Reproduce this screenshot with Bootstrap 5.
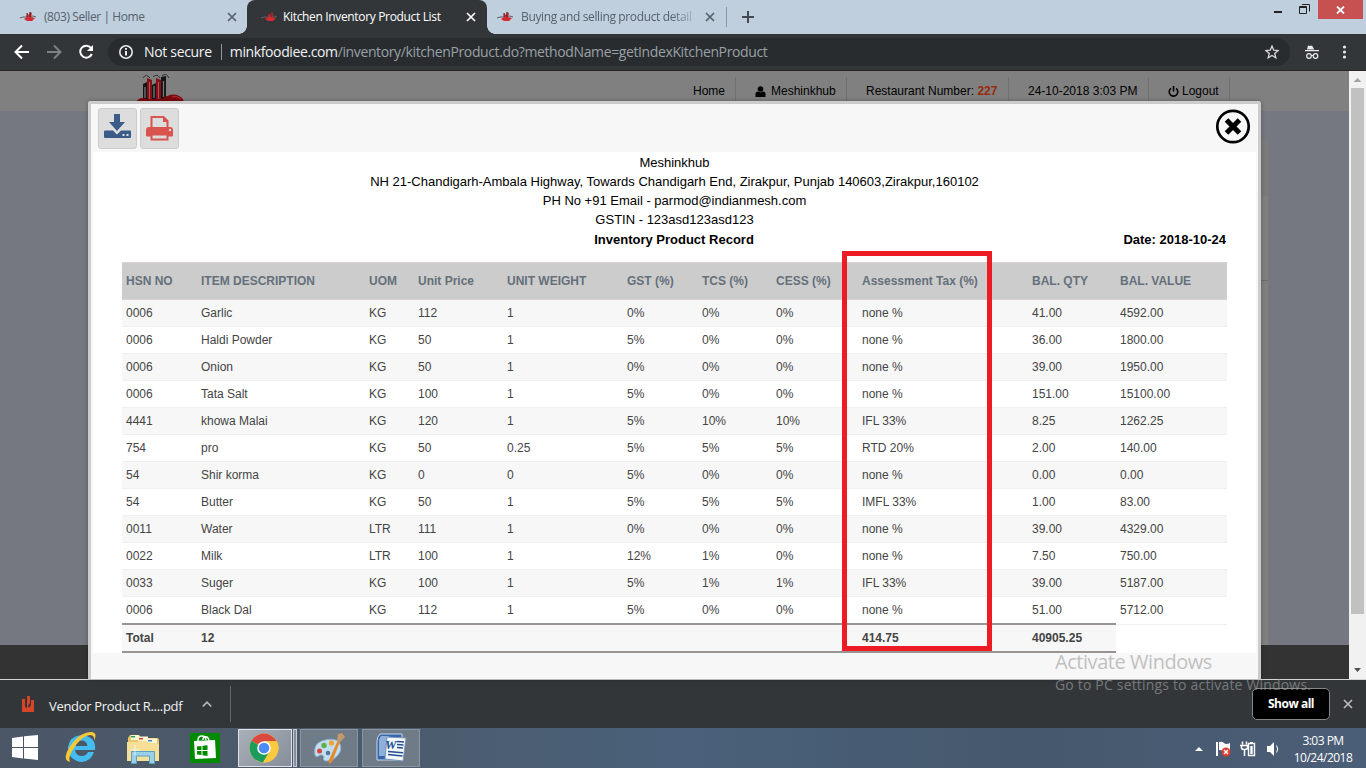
<!DOCTYPE html>
<html lang="en">
<head>
    <meta charset="UTF-8">
    <title>Kitchen Inventory Product List</title>
    <link href="https://cdn.jsdelivr.net/npm/bootstrap@5.3.0/dist/css/bootstrap.min.css" rel="stylesheet">
    <style>
        body { width: 1366px; height: 768px; font-family: "Liberation Sans", Arial, sans-serif; font-size: 12px; line-height: 18px; }
        svg { display: block; flex: none; }
        .ui-font { font-family: "Open Sans", "Noto Sans", sans-serif; white-space: nowrap; }

        /* Browser tabs and address bar */
        .tab-strip { height: 34px; background: #bfcfde; color: #56616b; }
        .tab { height: 34px; font-size: 12px; letter-spacing: -.42px; }
        .tab-one { width: 247px; padding: 0 10px 0 20px; }
        .tab-two { width: 240px; padding: 0 11px 0 14px; background: #323639; color: #fff; border-radius: 8px 8px 0 0; letter-spacing: -.34px; }
        .tab-two::before, .tab-two::after { content: ""; position: absolute; bottom: 0; width: 8px; height: 8px; }
        .tab-two::before { left: -8px; background: radial-gradient(circle at 0 0, transparent 7.5px, #323639 8px); }
        .tab-two::after { right: -8px; background: radial-gradient(circle at 100% 0, transparent 7.5px, #323639 8px); }
        .tab-three { width: 239px; padding: 0 11px 0 10px; letter-spacing: -.3px; }
        .tab-three .tab-text { -webkit-mask-image: linear-gradient(90deg, #000 150px, rgba(0, 0, 0, .2) 174px); }
        .tab-line { width: 1px; height: 20px; background: #8c979f; }
        .win-close { width: 45px; height: 19px; background: #c75050; }
        .toolbar { height: 37px; background: #323639; border-bottom: 1px solid #2a2426; }
        .omnibox { width: 1182px; height: 28px; border-radius: 14px; background: #282c2f; color: #9aa0a6; font-size: 14px; padding-left: 10px; }
        .omnibox b { color: #f1f3f4; font-weight: 400; }
        .omnibox .secure { margin-left: 10px; letter-spacing: -.32px; }
        .omnibox .address { letter-spacing: -.38px; }

        /* Dimmed page behind the dialog */
        .page { height: 608px; background: #757880; }
        .site-bar { height: 40px; background: #808080; color: #000; padding-top: 6px; padding-right: 119px; }
        .site-bar .menu-item { height: 34px; padding: 5px 10px 0 19px; border-right: 1px solid #707070; white-space: nowrap; }
        .site-bar b { color: #982a0a; }
        .site-logo { margin-left: 135px; margin-top: -4px; }
        .panel-edge { width: 1180px; height: 505px; margin: 29px 0 0 88px; background: #808080; }
        .panel-head { height: 56px; background: #7b7b7b; }
        .panel-line { height: 85px; border-bottom: 1px solid #6c6c6c; }
        .site-foot { height: 34px; background: #333; }
        .scroll-track { width: 17px; background: #f1f1f1; }
        .scroll-thumb { width: 13px; height: 526px; background: #c1c1c1; }

        /* Report dialog */
        .report { left: 88px; top: 30px; width: 1173px; height: 578px; background: #f7f7f7; border: 3px solid #ccc; border-bottom: 0; border-radius: 3px 3px 0 0; padding: 0 2px; box-shadow: 0 0 4px rgba(0, 0, 0, .3); }
        .report-tools { height: 48px; padding: 4px 5px; }
        .tool-btn { width: 39px; height: 41px; background: #ddd; border: 1px solid #ccc; border-radius: 3px; padding: 0; }
        .report-body { height: 501px; background: #fff; color: #000; font-size: 13px; line-height: 19px; padding: 1px 29px 0; }
        .stock { width: 1105px; table-layout: fixed; border-collapse: separate; border-spacing: 0; font-size: 12px; line-height: 18px; color: #444; margin-top: 13px; }
        .stock th, .stock td { padding: 0 4px; vertical-align: middle; white-space: nowrap; }
        .stock th { height: 38px; background: #ccc; color: #65707a; border: solid #ddd0d3; border-width: 1px 0; }
        .stock td { height: 27px; border-bottom: 1px solid #f0f0f0; }
        .stock tbody tr:nth-child(odd) td { background: #f7f7f7; }
        .stock tbody tr:last-child td { height: 26px; border-bottom: 0; }
        .stock tfoot td { height: 30px; background: #f7f7f7; border: solid #999392; border-width: 2px 0; font-weight: 700; }
        .stock tfoot td:last-child { background: #fff; border-color: #fff; border-top-width: 1px; box-shadow: inset 0 1px #f0f0f0; }
        .marker { left: 842px; top: 251px; width: 150px; height: 400px; border: 5px solid #ed1c24; }

        /* Download shelf and taskbar */
        .shelf { height: 49px; background: #323639; border-top: 1px solid #d5d5d5; color: #f1f3f4; }
        .shelf-file { width: 231px; height: 36px; border-right: 1px solid #63676b; padding-left: 22px; font-size: 13px; letter-spacing: -.32px; }
        .show-all { width: 78px; height: 32px; background: #000; border: 1px solid #85888a; border-radius: 5px; color: #fff; font-size: 12px; font-weight: 700; letter-spacing: -.47px; padding: 0; }
        .taskbar { height: 40px; background: linear-gradient(90deg, #4b5767, #4c5b6c 28%, #49617a 50%, #46586d 75%, #4b5e77); color: #fff; }
        .task { width: 58px; height: 38px; margin-top: 1px; background: #707b88; border: 1px solid #8d97a3; }
        .task-live { background: linear-gradient(135deg, #a9b0b8, #858e9a); border-color: #dfe2e5; width: 54px; padding-right: 2px; }
        .task-stack { width: 4px; height: 38px; margin: 1px 0 0 1px; background: #858e9a; border: 1px solid #c5cbd0; }
        .clock { width: 66px; font-size: 12px; line-height: 17px; letter-spacing: -.52px; }
        .watermark { left: 1055px; top: 650px; color: rgba(160, 160, 160, .65); font-size: 20px; line-height: 24px; letter-spacing: -.45px; }
        .watermark small { font-size: 14px; line-height: 21px; letter-spacing: .18px; }
    </style>
</head>
<body class="d-flex flex-column overflow-hidden position-relative m-0">
    <svg width="0" height="0" class="position-absolute">
        <defs>
            <symbol id="favicon" viewBox="0 0 16 10">
                <path d="M0 6l3-1h3l7-1 3 1" stroke="#655b61" fill="none"/>
                <path d="M4 7l3-2V1l2 2 1-3 2 1-1 4 4 1-3 3H7z" fill="#d22b32"/>
                <path d="M7 1v4M10 0v5" stroke="#452530"/>
            </symbol>
            <symbol id="cross" viewBox="0 0 10 10"><path d="M1 1l8 8M9 1L1 9" stroke="currentColor" stroke-width="1.7" fill="none"/></symbol>
        </defs>
    </svg>

    <!-- Tabs -->
    <div class="tab-strip ui-font d-flex">
        <div class="tab tab-one d-flex align-items-center">
            <svg width="16" height="10"><use href="#favicon"/></svg>
            <span class="ms-2 me-auto">(803) Seller | Home</span>
            <svg width="10" height="10"><use href="#cross"/></svg>
        </div>
        <div class="tab tab-two d-flex align-items-center position-relative">
            <svg width="16" height="10"><use href="#favicon"/></svg>
            <span class="me-auto" style="margin-left:6px">Kitchen Inventory Product List</span>
            <svg width="10" height="10"><use href="#cross"/></svg>
        </div>
        <div class="tab tab-three d-flex align-items-center">
            <svg width="16" height="10"><use href="#favicon"/></svg>
            <span class="tab-text ms-2 me-auto" style="letter-spacing:-.36px">Buying and selling product detail</span>
            <svg width="10" height="10"><use href="#cross"/></svg>
        </div>
        <div class="d-flex align-items-center">
            <div class="tab-line"></div>
            <svg style="margin-left:15px" width="12" height="12"><path d="M6 0v12M0 6h12" stroke="#45494d" stroke-width="2"/></svg>
        </div>
        <div class="d-flex ms-auto align-items-start" style="margin-right:3px">
            <svg width="44" height="19"><path d="M0 12h8" stroke="#222" stroke-width="2"/><path d="M25.500 6.500h7v7h-7zM26 7.500h7M28 4.500h7.500v7" fill="none" stroke="#222"/></svg>
            <div class="win-close d-flex align-items-center justify-content-center text-white"><svg width="9" height="8"><path d="M1 .5l7 7M8 .5l-7 7" stroke="#fff" stroke-width="1.800"/></svg></div>
        </div>
    </div>

    <!-- Address bar -->
    <div class="toolbar ui-font d-flex align-items-center">
        <svg width="108" height="36" fill="none" stroke="#fff" stroke-width="2">
            <path d="M29 18H16M22 11.500L15.500 18l6.500 6.500"/>
            <path d="M47 18h13M54 11.500l6.500 6.500-6.500 6.500" stroke="#7d8184"/>
            <path d="M91 14a6 6 0 1 0 .8 6"/><path d="M93 11v6h-6z" fill="#fff" stroke="none"/>
        </svg>
        <div class="omnibox d-flex align-items-center">
            <svg width="16" height="16" fill="none" stroke="#e8eaed" stroke-width="1.600"><circle cx="8" cy="8" r="6.200"/><path d="M8 7v4.500M8 4v1.800" stroke-width="2"/></svg>
            <b class="secure">Not secure</b>
            <span class="tab-line" style="height:16px;margin:0 8px 0 9px"></span>
            <span class="address"><b>minkfoodiee.com</b>/inventory/kitchenProduct.do?methodName=getIndexKitchenProduct</span>
            <svg class="ms-auto" style="margin-right:11px" width="14" height="14" viewBox="0 0 14 14"><path d="M7 1l1.700 4.200 4.500.3-3.500 2.900 1.200 4.400L7 10.400l-3.900 2.400 1.200-4.400L.8 5.500l4.500-.3z" fill="none" stroke="#d5d7d9" stroke-width="1.300"/></svg>
        </div>
        <svg width="76" height="36" fill="#e8eaed"><path d="M17 15.500l1-4 2 .6 2-.6 2.300 4zM15 16h14v1.300H15z"/><circle cx="19" cy="22" r="2.300" fill="none" stroke="#e8eaed" stroke-width="1.200"/><circle cx="25.500" cy="22" r="2.300" fill="none" stroke="#e8eaed" stroke-width="1.200"/><path d="M21 21.500h2.500" stroke="#e8eaed"/><circle cx="54.500" cy="13" r="1.600"/><circle cx="54.500" cy="18" r="1.600"/><circle cx="54.500" cy="23" r="1.600"/></svg>
    </div>

    <main class="page d-flex position-relative">
        <div class="flex-grow-1 d-flex flex-column">
            <div class="site-bar d-flex">
                <svg class="site-logo" width="51" height="34" viewBox="0 0 51 34">
                    <path d="M8 11l4-2v20H8zM26 4l5-1v24h-5zM17 12l4-2v17h-4z" fill="#151515"/>
                    <path d="M12 5l5 2v20h-5zM21 5l5 2v20h-5z" fill="#851018"/>
                    <path d="M10 14v11M19 13v12M28.500 8v16" stroke="#777" stroke-width="1.300"/><path d="M14.500 9v17M23.500 9v17" stroke="#aa5860"/>
                    <path d="M8 5q3-5 7 0M18 4q4-4 7 1M27 3q4-4 7 2" fill="none" stroke="#333"/>
                    <path d="M1 29q4-6 10-3h16q8-6 15-4 6 2 7 7z" fill="#7d080e"/><path d="M37 24q5-2 9 2" fill="none" stroke="#b0343c"/>
                </svg>
                <div class="menu-item ms-auto">Home</div>
                <div class="menu-item d-flex" style="width:111px">
                    <svg class="me-1" style="margin-top:4px" width="12" height="11"><circle cx="5.500" cy="3" r="2.800"/><path d="M.5 11V8q0-2.500 2.500-2.500l2.500 1 2.500-1q2.500 0 2.500 2.500v3z"/></svg>Meshinkhub
                </div>
                <div class="menu-item" style="width:162px">Restaurant Number: <b>227</b></div>
                <div class="menu-item" style="width:140px">24-10-2018 3:03 PM</div>
                <div class="menu-item d-flex" style="width:81px">
                    <svg style="margin:4px 3px 0 0" width="11" height="11" fill="none" stroke="#000" stroke-width="1.600"><path d="M3 2.300a4.300 4.300 0 1 0 5 0M5.500 0v5.500"/></svg>Logout
                </div>
            </div>
            <div class="panel-edge"><div class="panel-head"></div><div class="panel-line"></div></div>
            <div class="site-foot"></div>
        </div>
        <div class="scroll-track d-flex flex-column align-items-center">
            <svg width="17" height="17"><path d="M4.500 11L8.500 7l4 4z" fill="#a3a3a3"/></svg>
            <div class="scroll-thumb"></div>
            <svg class="mt-auto" width="17" height="17"><path d="M5 6l3.500 4L12 6z" fill="#505050"/></svg>
        </div>

        <section class="report position-absolute">
            <div class="report-tools d-flex">
                <button class="tool-btn d-flex justify-content-center" style="margin-right:3px" title="Download">
                    <svg width="29" height="30" viewBox="0 0 29 30" fill="#3b5c88"><path d="M11 5h6v8h5l-8 9-8-9h5z"/><path d="M2 21.500h8l4 4 4-4h9q1 0 1 1V28q0 1-1 1H2q-1 0-1-1v-5.500q0-1 1-1z"/><path d="M19.500 25h2v2h-2zM23.500 25h2v2h-2z" fill="#ddd"/></svg>
                </button>
                <button class="tool-btn d-flex justify-content-center" title="Print">
                    <svg width="29" height="33" viewBox="0 0 29 33"><path d="M6.500 20V8h12l4 4v8" fill="#ddd" stroke="#d9534f" stroke-width="2"/><path d="M18 7v6h5.500z" fill="#d9534f"/><path d="M4 18h21q3 0 3 3v5.500q0 1-1 1H2q-1 0-1-1V21q0-3 3-3z" fill="#d9534f"/><path d="M6.500 25.500h16v5h-16z" fill="#ddd" stroke="#d9534f" stroke-width="2"/><circle cx="25" cy="21" r="1.200" fill="#ddd"/></svg>
                </button>
                <svg class="ms-auto" width="36" height="36" viewBox="0 0 36 36" fill="none" stroke="#000"><circle cx="18" cy="18.500" r="15.700" stroke-width="2.700"/><path d="M11.500 12l13 13M24.500 12l-13 13" stroke-width="5"/></svg>
            </div>
            <div class="report-body">
                <div class="text-center">Meshinkhub</div>
                <div class="text-center">NH 21-Chandigarh-Ambala Highway, Towards Chandigarh End, Zirakpur, Punjab 140603,Zirakpur,160102</div>
                <div class="text-center">PH No +91 Email - parmod@indianmesh.com</div>
                <div class="text-center">GSTIN - 123asd123asd123</div>
                <div class="d-flex fw-bold" style="padding-top:1px;padding-right:1px">
                    <span style="flex:1"></span><span>Inventory Product Record</span><span class="text-end" style="flex:1">Date: 2018-10-24</span>
                </div>
                <table class="stock">
                    <colgroup id="cols"></colgroup>
                    <thead>
                        <tr><th>HSN NO</th><th>ITEM DESCRIPTION</th><th>UOM</th><th>Unit Price</th><th>UNIT WEIGHT</th><th>GST (%)</th><th>TCS (%)</th><th>CESS (%)</th><th>Assessment Tax (%)</th><th>BAL. QTY</th><th>BAL. VALUE</th></tr>
                    </thead>
                    <tbody id="stockRows"></tbody>
                    <tfoot>
                        <tr><td>Total</td><td>12</td><td></td><td></td><td></td><td></td><td></td><td></td><td>414.75</td><td>40905.25</td><td></td></tr>
                    </tfoot>
                </table>
            </div>
        </section>
    </main>

    <!-- Downloads -->
    <footer class="shelf ui-font d-flex align-items-center">
        <div class="shelf-file d-flex align-items-center">
            <svg width="12" height="17"><path d="M0 3h3v8l2 1V0h3v7l-2 3 1 2 2-3V4h3v12H0z" fill="#d64526"/></svg>
            <span style="margin:3px 0 0 15px">Vendor Product R....pdf</span>
            <svg style="margin-left:auto;margin-right:18px" width="10" height="6"><path d="M.7 5.500L5 1.200l4.300 4.300" fill="none" stroke="#b5b7b9" stroke-width="1.700"/></svg>
        </div>
        <button class="show-all ms-auto">Show all</button>
        <svg style="margin:0 13px 0 13px;color:#b9bbbd" width="10" height="10"><use href="#cross"/></svg>
    </footer>

    <div class="taskbar ui-font d-flex">
        <svg width="238" height="40">
            <path d="M12 10l11-1.500V19H12zM24 8.300L38 7v12H24zM12 20h11v10.500L12 29zM24 20h14v12l-14-1.500z" fill="#fff"/>
            <!-- Internet Explorer -->
            <path d="M94 24h-6q-2 4-6 4-6 0-7-6h20q1-6-3-11-5-4-11-4-11 1-13 12 0 7 4 11 5 4 10 4 9-1 12-10zM75.500 18q1-5 6-5.500 5 0 6 5.500z" fill="#45bdf0" fill-rule="evenodd"/>
            <path d="M70 34q-8-2-1-14Q79 4 92 4q6 1 2 9 1-6-4-6-6 0-14 10-9 12-6 17z" fill="#f7ca35"/>
            <!-- Explorer -->
            <path d="M128 10l2-3h9l2 3h16q2 0 2 2v21h-31z" fill="#e7c86c"/><path d="M131 7h8v5h-8zM138 8.500h10v5h-10zM147 10.500h10v5h-10z" fill="#fff5ce"/><path d="M131 8h4v1.500h-4z" fill="#20a464"/><path d="M139 10h4v1.500h-4z" fill="#db4437"/><path d="M148 12h4v1.500h-4z" fill="#3289dd"/>
            <path d="M127 14h21l2 2h9v17h-32z" fill="#f6df96"/><path d="M131.500 23.500h23v12h-5V28h-13v7.500h-5z" fill="#9bd0e8" stroke="#5ba0c6"/><path d="M135 17v10M130 22h10" stroke="#fff" opacity=".7"/>
            <!-- Store -->
            <path d="M190 5h30v30h-30z" fill="#008a00"/><path d="M194 13l21-1 1 18-21 1z" fill="#fff"/><path d="M198 14v-2q0-4 4-4t4 4M203 12v-1q1-3 4-2 2 1 2 4" fill="none" stroke="#fff" stroke-width="1.400"/><path d="M197 18.500l4.500-.5v4H197zM202.500 17.800l5-.6V22h-5zM197 23h4.500v4l-4.500-.5zM202.500 23h5v5l-5-.8z" fill="#008a00"/>
        </svg>
        <div class="task task-live d-flex align-items-center justify-content-center">
            <svg width="30" height="30" viewBox="0 0 30 30"><circle cx="15" cy="15" r="14.500" fill="#fbc940"/><path d="M15 15L2.500 7.700A14.500 14.500 0 0 1 27.600 8H15z" fill="#d9493f"/><path d="M2.500 7.700A14.500 14.500 0 0 0 14 29.400L20 19z" fill="#1b9c5b"/><path d="M15 8h12.600A14.500 14.500 0 0 1 14 29.400l7-11z" fill="#fbc940"/><circle cx="15" cy="15" r="6.800" fill="#fff"/><circle cx="15" cy="15" r="5.300" fill="#4c8bf5"/></svg>
        </div>
        <div class="task-stack"></div>
        <div class="task d-flex align-items-center justify-content-center" style="margin-left:3px">
            <svg width="31" height="32" viewBox="0 0 31 32"><path d="M1 23Q-1 12 8 9q11-4 17 1 4 7-1 13-5 6-11 6-5 0-3-4-1-3-4-2-4 3-5 0z" fill="#c2dff2" stroke="#8bb6d2"/><circle cx="5.500" cy="19" r="2.500" fill="#d8453c"/><circle cx="10" cy="13.500" r="2.700" fill="#5fb245"/><circle cx="17.500" cy="11" r="2.700" fill="#f0a43a"/><circle cx="14" cy="21" r="2.300" fill="#52779b"/><path d="M23.500 9l2.500 1-8 20-3 2-.5-3z" fill="#e48b2e"/><path d="M23 9l1-7 4-1 3 4-5 5z" fill="#c49a6c"/></svg>
        </div>
        <div class="task d-flex align-items-center justify-content-center" style="margin-left:4px">
            <svg width="31" height="32" viewBox="0 0 31 32"><path d="M4 2h22v26H1V9q0-4 3-7z" fill="#3564a9" stroke="#c8d9ef"/><path d="M5 4h8v20H3V10q0-4 2-6z" fill="#8eafd9"/><path d="M11 5l19 1-3 23-18-2z" fill="#f4f7fb" stroke="#7596bd"/><text x="9" y="17" font-family="Liberation Serif" font-style="italic" font-weight="700" font-size="13" fill="#244f92">W</text><path d="M21 9.500l7 .4M21 12.500l6.500.4M21 15.500l6 .4M12 19.500l15 1.200M12 22.500l14.500 1.500" stroke="#244f92" stroke-width="1.500"/></svg>
        </div>
        <svg class="ms-auto" width="100" height="40">
            <path d="M9 23l4-4 4 4z" fill="#fff"/>
            <path d="M31 14v14" stroke="#fff" stroke-width="2"/><path d="M33 14q3-1 5 1t6 0v8q-4 1-6 0t-5-1z" fill="#fff"/><circle cx="40" cy="24" r="4.500" fill="#dc3b32"/><path d="M38 22l4 4M42 22l-4 4" stroke="#fff" stroke-width="1.400"/>
            <path d="M56.500 13.500v3M60.500 13.500v3M54 17.500h8M55.500 18v2q0 1.500 3 1.500t3-1.500v-2M58.500 21v7" stroke="#fff" stroke-width="1.500" fill="none"/><path d="M62.500 15.500h6v12h-6z" fill="#4b5e77" stroke="#fff" stroke-width="1.400"/><path d="M64 14h3v1.500h-3zM64.300 18h2.400v8h-2.400z" fill="#fff"/>
            <path d="M81 18h3l4-4v14l-4-4h-3z" fill="#fff"/><path d="M90.500 17.500q2.500 3.500 0 7" stroke="#fff" fill="none"/>
        </svg>
        <div class="clock text-center" style="margin:4px 10px 0 4px">3:03 PM<br>10/24/2018</div>
    </div>

    <div class="marker position-absolute"></div>
    <div class="watermark ui-font position-absolute d-flex flex-column">Activate Windows<small>Go to PC settings to activate Windows.</small></div>

    <script>
        const widths = [75, 168, 49, 89, 120, 75, 74, 86, 170, 88, 111];
        const products = [
            ['0006', 'Garlic', 'KG', '112', '1', '0%', '0%', '0%', 'none %', '41.00', '4592.00'],
            ['0006', 'Haldi Powder', 'KG', '50', '1', '5%', '0%', '0%', 'none %', '36.00', '1800.00'],
            ['0006', 'Onion', 'KG', '50', '1', '0%', '0%', '0%', 'none %', '39.00', '1950.00'],
            ['0006', 'Tata Salt', 'KG', '100', '1', '5%', '0%', '0%', 'none %', '151.00', '15100.00'],
            ['4441', 'khowa Malai', 'KG', '120', '1', '5%', '10%', '10%', 'IFL 33%', '8.25', '1262.25'],
            ['754', 'pro', 'KG', '50', '0.25', '5%', '5%', '5%', 'RTD 20%', '2.00', '140.00'],
            ['54', 'Shir korma', 'KG', '0', '0', '5%', '0%', '0%', 'none %', '0.00', '0.00'],
            ['54', 'Butter', 'KG', '50', '1', '5%', '5%', '5%', 'IMFL 33%', '1.00', '83.00'],
            ['0011', 'Water', 'LTR', '111', '1', '0%', '0%', '0%', 'none %', '39.00', '4329.00'],
            ['0022', 'Milk', 'LTR', '100', '1', '12%', '1%', '0%', 'none %', '7.50', '750.00'],
            ['0033', 'Suger', 'KG', '100', '1', '5%', '1%', '1%', 'IFL 33%', '39.00', '5187.00'],
            ['0006', 'Black Dal', 'KG', '112', '1', '5%', '0%', '0%', 'none %', '51.00', '5712.00']
        ];

        document.getElementById('cols').innerHTML = widths.map(w => `<col style="width:${w}px">`).join('');
        document.getElementById('stockRows').innerHTML = products
            .map(row => `<tr>${row.map(cell => `<td>${cell}</td>`).join('')}</tr>`)
            .join('');
    </script>
    <script src="https://cdn.jsdelivr.net/npm/bootstrap@5.3.0/dist/js/bootstrap.bundle.min.js"></script>
</body>
</html>
